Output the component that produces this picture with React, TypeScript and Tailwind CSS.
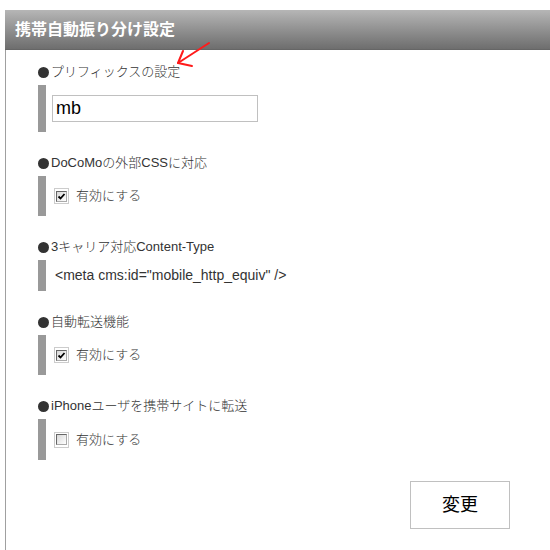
import React from 'react';

const font = { fontFamily: '"Liberation Sans", "Noto Sans CJK JP", sans-serif' };

const Heading: React.FC<{ children: React.ReactNode }> = ({ children }) => (
  <div className="h-[16px] flex items-center text-[13px] leading-[16px] text-[#333]">
    <span className="w-[11px] h-[11px] rounded-full bg-[#333] mr-[2px]" />
    <span className="font-light">{children}</span>
  </div>
);

const Checkbox: React.FC<{ checked?: boolean }> = ({ checked }) => (
  <span className="w-[15px] h-[16px] border border-[#cccccc] bg-white flex items-center justify-center">
    <span className="w-[11px] h-[11px] border-t border-l border-[#666] border-r border-b border-r-[#aaa] border-b-[#aaa] bg-gradient-to-br from-[#d8d8d8] to-white flex items-center justify-center">
      {checked && (
        <svg width="9" height="9" viewBox="0 0 9 9">
          <path d="M1.5 4.5 L3.5 6.5 L7.5 2" fill="none" stroke="#000" strokeWidth="1.8" />
        </svg>
      )}
    </span>
  </span>
);

const Enable: React.FC<{ checked?: boolean }> = ({ checked }) => (
  <div className="flex items-center pl-[8px]">
    <Checkbox checked={checked} />
    <span className="ml-[7px] text-[13px] text-[#333] font-light">有効にする</span>
  </div>
);

export default function App() {
  return (
    <div className="relative w-[550px] h-[550px] bg-white pt-[10px] pl-[5px] overflow-hidden" style={font}>
      <div className="h-[40px] bg-gradient-to-b from-[#b6b6b6] to-[#6e6e6e] border-b border-[#666] flex items-center pl-[10px]">
        <h1 className="text-white text-[16px] font-bold leading-none">携帯自動振り分け設定</h1>
      </div>
      <div className="border-l border-[#a0a0a0] h-[500px] pl-[32px] pt-[14px]">
        <Heading>プリフィックスの設定</Heading>
        <div className="mt-[5px] h-[47px] border-l-[8px] border-[#999] flex items-center pl-[6px]">
          <input
            defaultValue="mb"
            className="w-[206px] h-[27px] border border-[#c0c0c0] px-[3px] text-[18px] text-black outline-none"
            style={font}
          />
        </div>

        <div className="mt-[23px]">
          <Heading>DoCoMoの外部CSSに対応</Heading>
          <div className="mt-[5px] h-[40px] border-l-[8px] border-[#999] flex items-center">
            <Enable checked />
          </div>
        </div>

        <div className="mt-[23px]">
          <Heading>3キャリア対応Content-Type</Heading>
          <div className="mt-[5px] h-[31px] border-l-[8px] border-[#999] flex items-center pl-[9px] text-[14px] text-[#333]">
            {'<meta cms:id="mobile_http_equiv" />'}
          </div>
        </div>

        <div className="mt-[23px]">
          <Heading>自動転送機能</Heading>
          <div className="mt-[5px] h-[40px] border-l-[8px] border-[#999] flex items-center">
            <Enable checked />
          </div>
        </div>

        <div className="mt-[23px]">
          <Heading>iPhoneユーザを携帯サイトに転送</Heading>
          <div className="mt-[5px] h-[41px] border-l-[8px] border-[#999] flex items-center">
            <Enable />
          </div>
        </div>

        <div className="flex justify-end pr-[40px] mt-[21px]">
          <button className="w-[100px] h-[48px] border border-[#c0c0c0] bg-white text-[18px] text-black">
            変更
          </button>
        </div>
      </div>

      <svg className="absolute left-[170px] top-[38px]" width="45" height="32" viewBox="0 0 45 32">
        <path d="M39 5 L8 25" stroke="#ff1a1a" strokeWidth="2" fill="none" strokeLinecap="round" />
        <path d="M13 13 L8 25 L22 28" stroke="#ff1a1a" strokeWidth="2" fill="none" strokeLinecap="round" strokeLinejoin="round" />
      </svg>
    </div>
  );
}
